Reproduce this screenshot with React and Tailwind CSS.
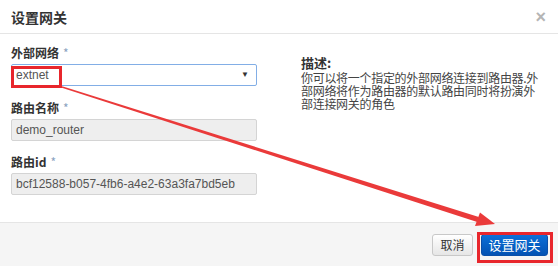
import React from "react";

export default function App() {
  return (
    <div className="relative w-[558px] h-[266px] bg-white overflow-hidden font-['Liberation_Sans','Noto_Sans_CJK_SC',sans-serif] text-[#333]">
      {/* Header */}
      <div className="h-[34px] border-b border-[#e5e5e5] flex items-center justify-between pl-[11px] pr-[12px]">
        <div className="text-[14px] font-bold text-[#333] leading-none font-['Noto_Sans_CJK_SC',sans-serif]">设置网关</div>
        <div className="text-[18px] leading-none text-[#b5b5b5] font-bold">×</div>
      </div>

      {/* Body */}
      <div className="h-[188px] flex pl-[11px] pt-[10px]">
        <div className="w-[246px] flex flex-col">
          <Label text="外部网络" />
          <div className="mt-[3px] h-[22px] border border-[#82aee6] rounded-[2px] flex items-center justify-between pl-[4px] pr-[7px] bg-white">
            <span className="text-[12px] text-[#555]">extnet</span>
            <span className="text-[8px] text-[#333] leading-none">▼</span>
          </div>
          <div className="mt-[13px]">
            <Label text="路由名称" />
          </div>
          <div className="mt-[3px] h-[22px] border border-[#d4d4d4] rounded-[2px] bg-[#eeeeee] flex items-center pl-[4px]">
            <span className="text-[12px] text-[#555]">demo_router</span>
          </div>
          <div className="mt-[12px]">
            <Label text="路由id" />
          </div>
          <div className="mt-[3px] h-[22px] border border-[#d4d4d4] rounded-[2px] bg-[#eeeeee] flex items-center pl-[4px]">
            <span className="text-[12px] text-[#555] whitespace-nowrap">bcf12588-b057-4fb6-a4e2-63a3fa7bd5eb</span>
          </div>
        </div>

        <div className="ml-[44px] pt-[10px] flex flex-col font-['Noto_Sans_CJK_SC',sans-serif]">
          <div className="text-[13px] font-bold leading-[17px] text-[#333]">描述:</div>
          <div className="text-[12px] leading-[13px] text-[#444] whitespace-nowrap tracking-[-0.3px]">
            <div>你可以将一个指定的外部网络连接到路由器.外</div>
            <div>部网络将作为路由器的默认路由同时将扮演外</div>
            <div>部连接网关的角色</div>
          </div>
        </div>
      </div>

      {/* Footer */}
      <div className="h-[44px] border-t border-[#e5e5e5] bg-[#f5f5f5] flex items-center justify-end pr-[10px] gap-[8px]">
        <div className="w-[41px] h-[22px] rounded-[3px] border border-[#c8c8c8] bg-gradient-to-b from-white to-[#e6e6e6] flex items-center justify-center text-[12px] text-[#333] font-['Noto_Sans_CJK_SC',sans-serif]">
          取消
        </div>
        <div className="w-[67px] h-[22px] rounded-[3px] border border-[#0a4fa8] bg-gradient-to-b from-[#0d70d8] to-[#0352b3] flex items-center justify-center text-[13px] text-white font-['Noto_Sans_CJK_SC',sans-serif]">
          设置网关
        </div>
      </div>

      {/* Annotations */}
      <div className="absolute left-[11px] top-[66px] w-[51px] h-[22px] border-[3px] border-[#e8262c]" />
      <div className="absolute left-[477px] top-[232px] w-[76px] h-[31px] border-[3px] border-[#e8262c]" />
      <svg className="absolute left-0 top-0" width="558" height="266" viewBox="0 0 558 266">
        <polygon points="61.8,87.8 62.2,86.2 478.8,217.1 477.2,221.9" fill="#ea3a3a" />
        <polygon points="495,224 480,212.5 475,226" fill="#ea3a3a" />
      </svg>
    </div>
  );
}

function Label({ text }) {
  return (
    <div className="h-[17px] flex items-center text-[12px] font-bold text-[#333] font-['Noto_Sans_CJK_SC',sans-serif]">
      {text}
      <span className="ml-[4px] text-[#8aa3bf] font-normal">*</span>
    </div>
  );
}
